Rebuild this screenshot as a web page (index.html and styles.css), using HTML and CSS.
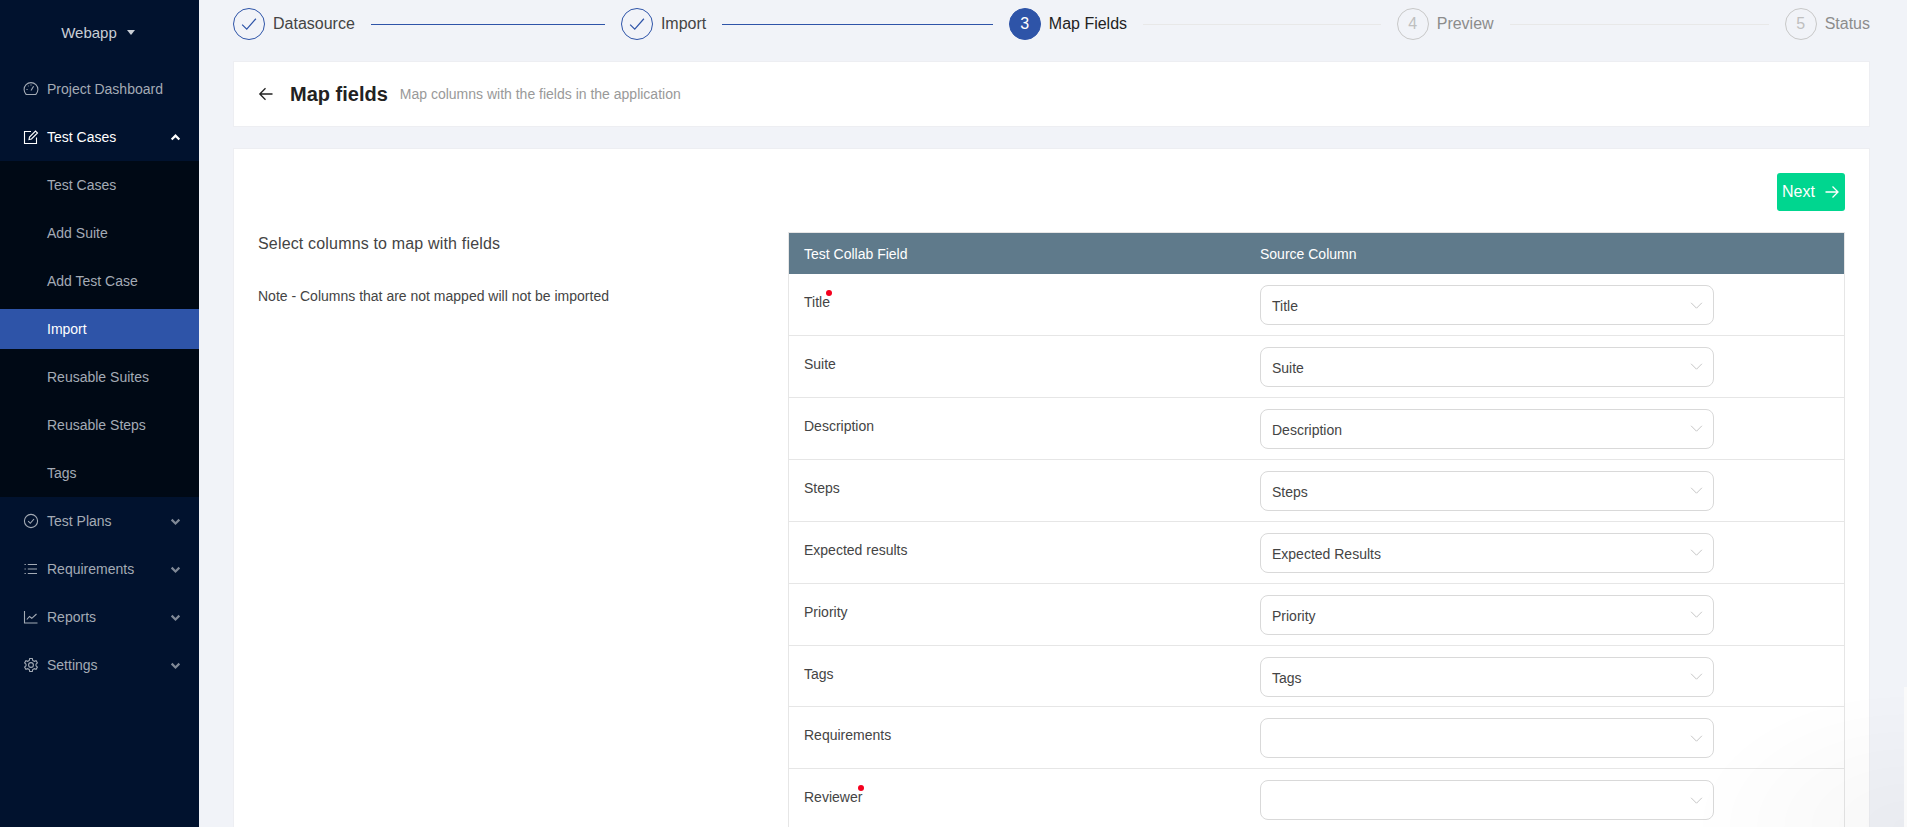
FILE: index.html
```html
<!DOCTYPE html>
<html lang="en">
<head>
  <meta charset="UTF-8" />
  <meta name="viewport" content="width=device-width, initial-scale=1.0" />
  <title>Map fields</title>
  <link rel="stylesheet" href="styles.css">
</head>
<body>

<!-- Sidebar -->
<aside class="sidebar">
  <div class="brand">Webapp <span class="brand-caret"></span></div>

  <a class="nav-item">
    <svg class="nav-icon" viewBox="0 0 16 16"><path d="M3.2 13.5A6.9 6.9 0 1 1 12.8 13.5Z"/><path d="M8 9.5L10.6 5.2"/><path d="M3.5 8.5H4.6M4.9 5H5.6M8 3.4V4.4"/></svg>
    <span>Project Dashboard</span>
  </a>

  <a class="nav-item open">
    <svg class="nav-icon" viewBox="0 0 16 16"><path d="M13.5 8.5V14.5H1.5V2.5H8"/><path d="M6 10.5L6.5 8L12.5 2L14.5 4L8.5 10Z"/></svg>
    <span>Test Cases</span>
    <svg class="nav-arrow" viewBox="0 0 10 10"><path d="M1.5 6.8L5 3.3L8.5 6.8"/></svg>
  </a>

  <div class="subnav">
    <a class="sub-item">Test Cases</a>
    <a class="sub-item">Add Suite</a>
    <a class="sub-item">Add Test Case</a>
    <a class="sub-item active">Import</a>
    <a class="sub-item">Reusable Suites</a>
    <a class="sub-item">Reusable Steps</a>
    <a class="sub-item">Tags</a>
  </div>

  <a class="nav-item">
    <svg class="nav-icon" viewBox="0 0 16 16"><circle cx="8" cy="8" r="6.6"/><path d="M5.2 8.2L7.3 10.3L11 6"/></svg>
    <span>Test Plans</span>
    <svg class="nav-arrow" viewBox="0 0 10 10"><path d="M1.5 3.3L5 6.8L8.5 3.3"/></svg>
  </a>
  <a class="nav-item">
    <svg class="nav-icon" viewBox="0 0 16 16"><path d="M4.8 3.5H14M4.8 8H14M4.8 12.5H14M1.5 3.5H2.8M1.5 8H2.8M1.5 12.5H2.8"/></svg>
    <span>Requirements</span>
    <svg class="nav-arrow" viewBox="0 0 10 10"><path d="M1.5 3.3L5 6.8L8.5 3.3"/></svg>
  </a>
  <a class="nav-item">
    <svg class="nav-icon" viewBox="0 0 16 16"><path d="M1.5 2V14H14.5"/><path d="M3.8 10.5L6.5 7.5L8.8 9.3L13.5 5"/></svg>
    <span>Reports</span>
    <svg class="nav-arrow" viewBox="0 0 10 10"><path d="M1.5 3.3L5 6.8L8.5 3.3"/></svg>
  </a>
  <a class="nav-item">
    <svg class="nav-icon" viewBox="0 0 16 16"><circle cx="8" cy="8" r="2.4"/><path d="M6.7 1.5H9.3L9.7 3.4L11.3 4.3L13.1 3.7L14.4 6L13 7.2V8.8L14.4 10L13.1 12.3L11.3 11.7L9.7 12.6L9.3 14.5H6.7L6.3 12.6L4.7 11.7L2.9 12.3L1.6 10L3 8.8V7.2L1.6 6L2.9 3.7L4.7 4.3L6.3 3.4Z"/></svg>
    <span>Settings</span>
    <svg class="nav-arrow" viewBox="0 0 10 10"><path d="M1.5 3.3L5 6.8L8.5 3.3"/></svg>
  </a>
</aside>

<main class="content">

  <!-- Steps -->
  <div class="steps">
    <div class="step done">
      <span class="step-circle"><svg viewBox="0 0 16 16"><path d="M2.5 8.5L6.2 12.2L13.5 3.8"/></svg></span>
      <span class="step-title">Datasource</span>
      <span class="step-line"></span>
    </div>
    <div class="step done">
      <span class="step-circle"><svg viewBox="0 0 16 16"><path d="M2.5 8.5L6.2 12.2L13.5 3.8"/></svg></span>
      <span class="step-title">Import</span>
      <span class="step-line"></span>
    </div>
    <div class="step current">
      <span class="step-circle">3</span>
      <span class="step-title">Map Fields</span>
      <span class="step-line"></span>
    </div>
    <div class="step">
      <span class="step-circle">4</span>
      <span class="step-title">Preview</span>
      <span class="step-line"></span>
    </div>
    <div class="step last">
      <span class="step-circle">5</span>
      <span class="step-title">Status</span>
    </div>
  </div>

  <!-- Page header -->
  <div class="page-header">
    <svg class="back-icon" viewBox="0 0 16 16"><path d="M14.5 8H1.8M7.5 2.3L1.8 8L7.5 13.7"/></svg>
    <h1>Map fields</h1>
    <span class="page-sub">Map columns with the fields in the application</span>
  </div>

  <section class="card">
    <div class="card-actions">
      <button class="next-btn" type="button">Next
        <svg viewBox="0 0 16 16"><path d="M1.5 8H14M8.5 2.5L14 8L8.5 13.5"/></svg>
      </button>
    </div>

    <div class="map-layout">
      <div class="map-help">
        <p class="help-title">Select columns to map with fields</p>
        <p class="help-note">Note - Columns that are not mapped will not be imported</p>
      </div>

      <div class="map-table">
        <div class="map-head">
          <div>Test Collab Field</div>
          <div>Source Column</div>
        </div>

        <div class="map-row">
          <div class="field required">Title</div>
          <div class="select"><span>Title</span><svg viewBox="0 0 12 12"><path d="M1 3.5L6 8.5L11 3.5"/></svg></div>
        </div>
        <div class="map-row">
          <div class="field">Suite</div>
          <div class="select"><span>Suite</span><svg viewBox="0 0 12 12"><path d="M1 3.5L6 8.5L11 3.5"/></svg></div>
        </div>
        <div class="map-row">
          <div class="field">Description</div>
          <div class="select"><span>Description</span><svg viewBox="0 0 12 12"><path d="M1 3.5L6 8.5L11 3.5"/></svg></div>
        </div>
        <div class="map-row">
          <div class="field">Steps</div>
          <div class="select"><span>Steps</span><svg viewBox="0 0 12 12"><path d="M1 3.5L6 8.5L11 3.5"/></svg></div>
        </div>
        <div class="map-row">
          <div class="field">Expected results</div>
          <div class="select"><span>Expected Results</span><svg viewBox="0 0 12 12"><path d="M1 3.5L6 8.5L11 3.5"/></svg></div>
        </div>
        <div class="map-row">
          <div class="field">Priority</div>
          <div class="select"><span>Priority</span><svg viewBox="0 0 12 12"><path d="M1 3.5L6 8.5L11 3.5"/></svg></div>
        </div>
        <div class="map-row">
          <div class="field">Tags</div>
          <div class="select"><span>Tags</span><svg viewBox="0 0 12 12"><path d="M1 3.5L6 8.5L11 3.5"/></svg></div>
        </div>
        <div class="map-row">
          <div class="field">Requirements</div>
          <div class="select"><svg viewBox="0 0 12 12"><path d="M1 3.5L6 8.5L11 3.5"/></svg></div>
        </div>
        <div class="map-row">
          <div class="field required">Reviewer</div>
          <div class="select"><svg viewBox="0 0 12 12"><path d="M1 3.5L6 8.5L11 3.5"/></svg></div>
        </div>
      </div>
    </div>
  </section>
</main>

<!-- soft shade in the corner of the window -->
<div class="corner-shade"></div>

</body>
</html>
```

FILE: styles.css
```css
* {
  box-sizing: border-box;
}

html, body {
  height: 100%;
}

body {
  margin: 0;
  display: flex;
  overflow: hidden;
  font-family: "Liberation Sans", Arial, sans-serif;
  font-size: 14px;
  color: #333;
  background: #f1f3f8;
}

/* Sidebar */
.sidebar {
  width: 199px;
  flex-shrink: 0;
  background: #01122e;
  color: #a4abb5;
}

.brand {
  height: 65px;
  display: flex;
  align-items: center;
  justify-content: center;
  gap: 10px;
  padding-right: 3px;
  color: #c9ced6;
  font-size: 15px;
}

.brand-caret {
  width: 0;
  height: 0;
  border-left: 4px solid transparent;
  border-right: 4px solid transparent;
  border-top: 5px solid #c9ced6;
}

.nav-item {
  height: 48px;
  display: flex;
  align-items: center;
  padding: 0 18px 0 23px;
}

.nav-item span {
  flex: 1;
}

.nav-icon {
  width: 16px;
  height: 16px;
  margin-right: 8px;
  fill: none;
  stroke: #a4abb5;
  stroke-width: 1.1;
}

.nav-arrow {
  width: 11px;
  height: 11px;
  fill: none;
  stroke: #7f8896;
  stroke-width: 2;
}

.nav-item.open {
  color: #fff;
}

.nav-item.open .nav-icon {
  stroke: #fff;
}

.nav-item.open .nav-arrow {
  stroke: #fff;
}

.subnav {
  background: #000915;
  padding-top: 4px;
  height: 336px;
}

.sub-item {
  display: flex;
  align-items: center;
  height: 40px;
  margin-bottom: 8px;
  padding-left: 47px;
}

.sub-item.active {
  background: #2e54a8;
  color: #fff;
}

/* Steps */
.content {
  flex: 1;
  min-width: 0;
  padding: 8px 37px 0 34px;
}

.steps {
  display: flex;
  align-items: center;
  height: 32px;
  margin-bottom: 21px;
  font-size: 16px;
}

.step {
  flex: 1;
  display: flex;
  align-items: center;
}

.step.last {
  flex: none;
}

.step-circle {
  width: 32px;
  height: 32px;
  flex-shrink: 0;
  display: flex;
  align-items: center;
  justify-content: center;
  border: 1px solid #c8c8c8;
  border-radius: 50%;
  color: #bfbfbf;
}

.step-circle svg {
  width: 20px;
  height: 20px;
  fill: none;
  stroke: #2e54a8;
  stroke-width: 0.95;
}

.step-title {
  margin-left: 8px;
  color: #8c8c8c;
}

.step-line {
  flex: 1;
  height: 1px;
  margin: 0 16px;
  background: #e8e8e8;
}

.step.done .step-circle {
  border-color: #2e54a8;
}

.step.done .step-title {
  color: #444;
}

.step.done .step-line {
  background: #2e54a8;
}

.step.current .step-circle {
  border-color: #2e54a8;
  background: #2e54a8;
  color: #fff;
}

.step.current .step-title {
  color: #222;
}

/* Page header */
.page-header {
  height: 66px;
  display: flex;
  align-items: center;
  margin-bottom: 21px;
  padding: 0 25px;
  background: #fff;
  border: 1px solid #edeef2;
}

.back-icon {
  width: 16px;
  height: 16px;
  margin-right: 16px;
  margin-left: -1px;
  fill: none;
  stroke: #222;
  stroke-width: 1.3;
}

.page-header h1 {
  margin: 0 12px 0 0;
  font-size: 20px;
  font-weight: bold;
  color: #222;
}

.page-sub {
  color: #999;
}

/* Card */
.card {
  background: #fff;
  border: 1px solid #edeef2;
  padding: 24px 24px 0;
  min-height: 800px;
}

.card-actions {
  display: flex;
  justify-content: flex-end;
  margin-bottom: 21px;
}

.next-btn {
  height: 38px;
  width: 68px;
  display: flex;
  align-items: center;
  justify-content: center;
  gap: 9px;
  padding: 0;
  border: none;
  border-radius: 3px;
  background: #00d68f;
  color: #fff;
  font-family: inherit;
  font-size: 16px;
}

.next-btn svg {
  width: 16px;
  height: 16px;
  fill: none;
  stroke: #fff;
  stroke-width: 1.3;
}

.map-layout {
  display: flex;
}

.map-help {
  width: 530px;
  flex-shrink: 0;
}

.help-title {
  margin: 3px 0 35px;
  font-size: 16px;
  letter-spacing: 0.17px;
  color: #444;
}

.help-note {
  margin: 0;
  color: #444;
}

.map-table {
  flex: 1;
  border: 1px solid #e6e6e6;
  border-bottom: none;
}

.map-head,
.map-row {
  display: grid;
  grid-template-columns: 456px 454px;
  padding-left: 15px;
}

.map-head {
  height: 41px;
  align-items: center;
  background: #5f7a8b;
  color: #fff;
}

.map-row {
  height: 61.93px;
  padding-top: 11px;
  border-bottom: 1px solid #e6e6e6;
}

.field {
  margin-top: 9px;
  color: #444;
}

.field.required {
  position: relative;
  justify-self: start;
}

.field.required::after {
  content: "";
  position: absolute;
  top: -4px;
  right: -2px;
  width: 6px;
  height: 6px;
  border-radius: 50%;
  background: #f5001e;
}

.select {
  height: 40px;
  display: flex;
  align-items: center;
  padding: 0 10px 0 11px;
  border: 1px solid #d9d9d9;
  border-radius: 8px;
  background: #fff;
  color: #444;
}

.select span {
  padding-top: 2px;
}

.select svg {
  width: 13px;
  height: 13px;
  margin-left: auto;
  fill: none;
  stroke: #c4c4c4;
  stroke-width: 0.9;
}

.corner-shade {
  position: fixed;
  right: 0;
  bottom: 0;
  width: 220px;
  height: 140px;
  background: radial-gradient(ellipse at 100% 100%, rgba(0, 0, 0, 0.03), rgba(0, 0, 0, 0) 70%);
  pointer-events: none;
}

.corner-shade::after {
  content: "";
  position: absolute;
  right: 0;
  top: 0;
  bottom: 0;
  width: 3px;
  background: #fafafa;
}
```
